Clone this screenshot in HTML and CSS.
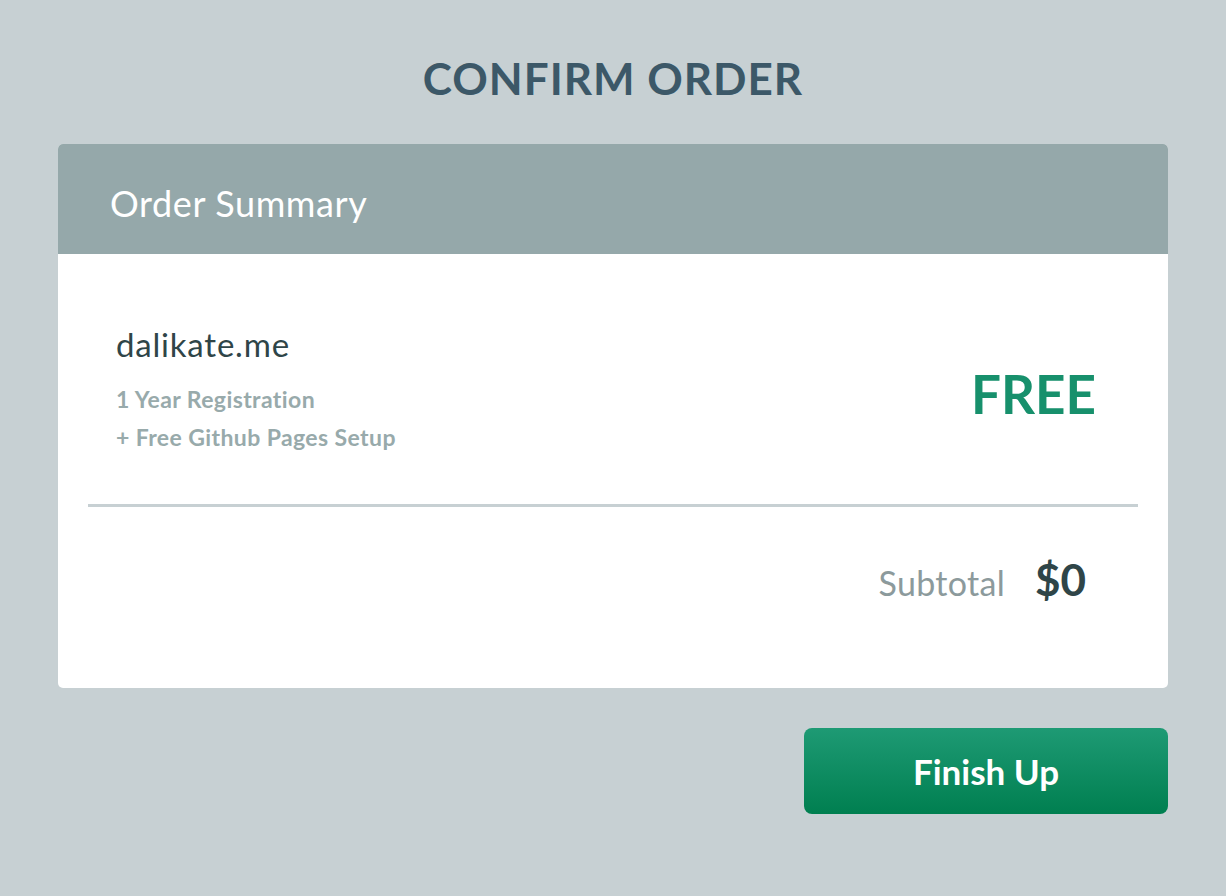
FILE: index.html
```html
<!DOCTYPE html>
<html lang="en">
<head>
<meta charset="utf-8">
<title>Confirm Order</title>
<link rel="stylesheet" href="styles.css">
</head>
<body>
<main class="page">
  <h1 class="title">CONFIRM ORDER</h1>
  <section class="card">
    <header class="card-head">Order Summary</header>
    <div class="item">
      <div class="item-info">
        <div class="item-name">dalikate.me</div>
        <div class="item-sub">1 Year Registration</div>
        <div class="item-sub">+ Free Github Pages Setup</div>
      </div>
      <div class="item-price">FREE</div>
    </div>
    <hr class="divider">
    <div class="subtotal">
      <span class="subtotal-label">Subtotal</span>
      <span class="subtotal-value">$0</span>
    </div>
  </section>
  <div class="actions">
    <button class="finish">Finish Up</button>
  </div>
</main>
</body>
</html>
```
FILE: styles.css
```css
html, body {
  margin: 0;
  padding: 0;
  background: #c7d0d3;
}
body {
  font-family: "Lato", "Open Sans", sans-serif;
}
.page {
  width: 1110px;
  margin: 0 auto;
  padding-top: 50px;
  padding-bottom: 80px;
}
.title {
  margin: 0;
  text-align: center;
  font-size: 44px;
  line-height: 56px;
  font-weight: 700;
  color: #3c5868;
  letter-spacing: 1px;
}
.card {
  margin-top: 38px;
  background: #fff;
  border-radius: 5px;
  overflow: hidden;
}
.card-head {
  height: 110px;
  box-sizing: border-box;
  padding: 8px 52px 0;
  display: flex;
  align-items: center;
  background: #95a8aa;
  color: #fff;
  font-size: 36px;
  letter-spacing: 0.6px;
}
.item {
  display: flex;
  justify-content: space-between;
  align-items: center;
  padding: 70px 72px 48px 58px;
}
.item-name {
  font-size: 33px;
  color: #2f4548;
  line-height: 40px;
  margin-bottom: 16px;
  letter-spacing: 0.8px;
}
.item-sub {
  font-size: 23px;
  line-height: 38px;
  color: #98aaab;
  font-weight: 700;
  letter-spacing: 0.4px;
}
.item-price {
  font-size: 53px;
  font-weight: 700;
  color: #17906c;
  margin-top: 6px;
}
.divider {
  margin: 0 30px;
  border: 0;
  height: 3px;
  background: #c7d0d3;
}
.subtotal {
  display: flex;
  justify-content: flex-end;
  align-items: baseline;
  gap: 30px;
  padding: 46px 82px 83px 0;
}
.subtotal-label {
  font-size: 34px;
  color: #8c9a9c;
  letter-spacing: 0.3px;
}
.subtotal-value {
  font-size: 44px;
  font-weight: 700;
  color: #2f4548;
}
.actions {
  display: flex;
  justify-content: flex-end;
  margin-top: 40px;
}
.finish {
  width: 364px;
  height: 86px;
  border: 0;
  border-radius: 8px;
  background: linear-gradient(#1e9a74, #007f50);
  color: #fff;
  font-family: inherit;
  font-size: 35px;
  font-weight: 700;
  cursor: pointer;
}
```
